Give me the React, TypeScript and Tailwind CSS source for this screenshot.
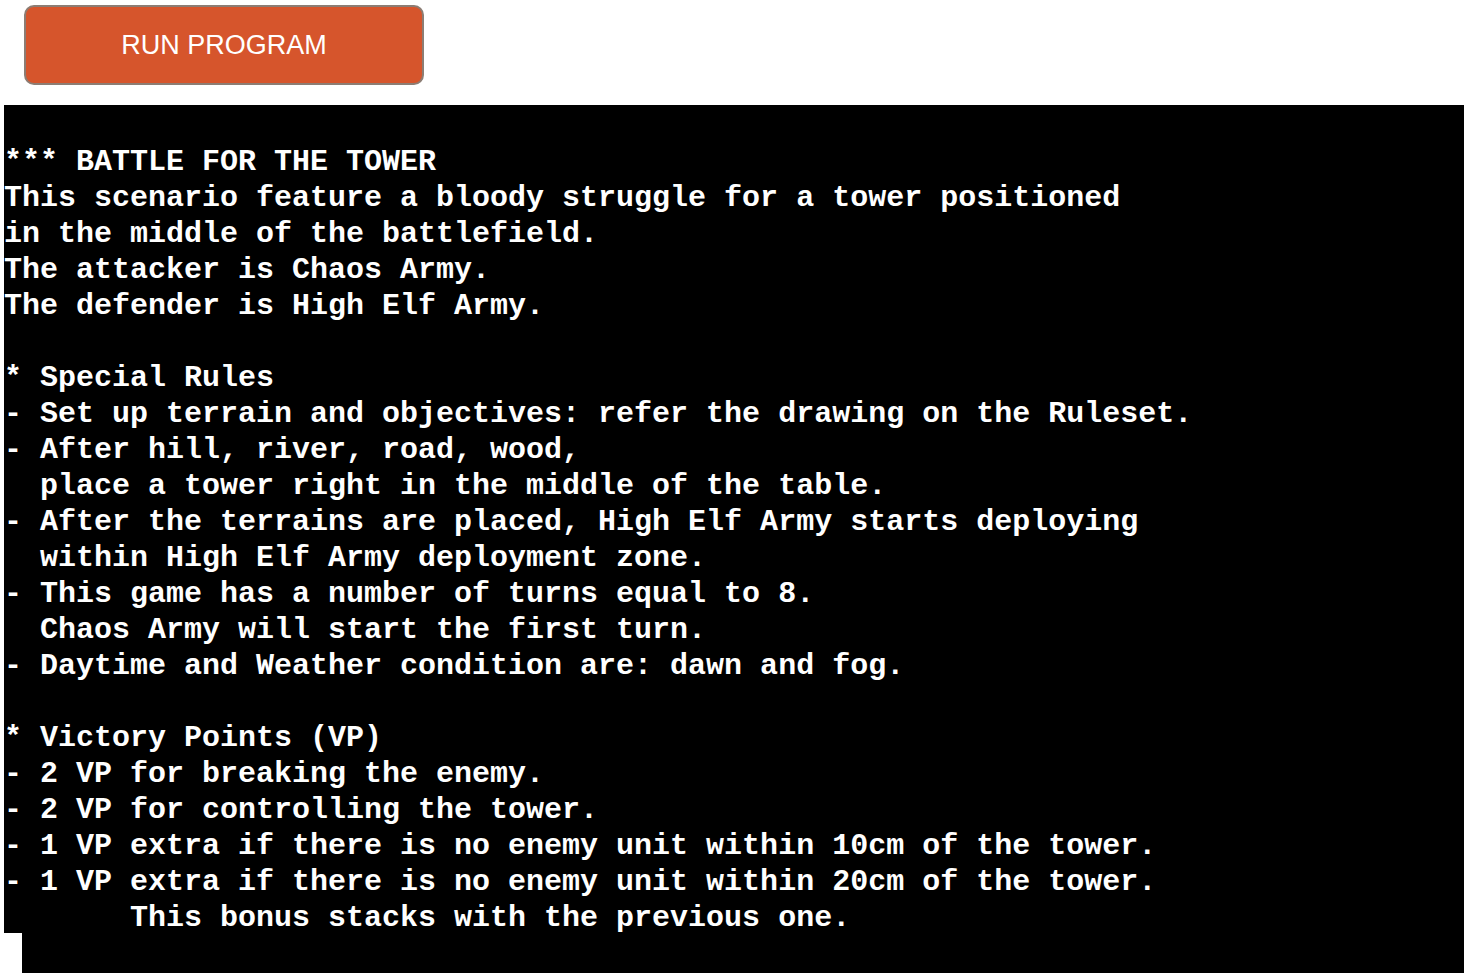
const lines = [
  '',
  '*** BATTLE FOR THE TOWER',
  'This scenario feature a bloody struggle for a tower positioned',
  'in the middle of the battlefield.',
  'The attacker is Chaos Army.',
  'The defender is High Elf Army.',
  '',
  '* Special Rules',
  '- Set up terrain and objectives: refer the drawing on the Ruleset.',
  '- After hill, river, road, wood,',
  '  place a tower right in the middle of the table.',
  '- After the terrains are placed, High Elf Army starts deploying',
  '  within High Elf Army deployment zone.',
  '- This game has a number of turns equal to 8.',
  '  Chaos Army will start the first turn.',
  '- Daytime and Weather condition are: dawn and fog.',
  '',
  '* Victory Points (VP)',
  '- 2 VP for breaking the enemy.',
  '- 2 VP for controlling the tower.',
  '- 1 VP extra if there is no enemy unit within 10cm of the tower.',
  '- 1 VP extra if there is no enemy unit within 20cm of the tower.',
  '       This bonus stacks with the previous one.',
]

const App = () => {
  return (
    <div className="min-h-[973px] bg-white">
      <div className="pt-[5px] pl-[24px]">
        <button className="w-[400px] h-[80px] rounded-[10px] border-2 border-[#8c7d74] bg-[#d6552c] text-white text-[27px] font-['Liberation_Sans',Arial,sans-serif]">
          RUN PROGRAM
        </button>
      </div>
      <div className="mt-[20px] ml-[4px] w-[1460px] bg-black">
        <div className="h-[828px]">
          {lines.map((line, i) => (
            <div
              key={i}
              className="h-[36px] pt-[6px] leading-[30px] whitespace-pre text-[30px] font-bold text-white font-['Courier_New','Liberation_Mono',monospace]"
            >
              {line}
            </div>
          ))}
        </div>
      </div>
      <div className="ml-[22px] w-[1442px] h-[40px] bg-black" />
    </div>
  )
}

export default App
